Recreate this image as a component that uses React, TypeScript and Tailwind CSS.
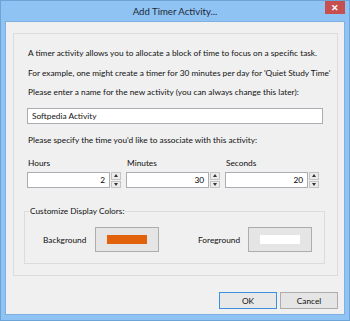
import React from "react";

const font = { fontFamily: 'Lato, "Noto Sans", sans-serif' };

function Spin({ value }: { value: string }) {
  return (
    <div className="flex items-center">
      <div className="w-[83px] h-[16px] bg-white border border-[#abadb3] flex items-center justify-end pr-[4px] text-black leading-none">
        {value}
      </div>
      <div className="ml-[1px] w-[10px] h-[16px] flex flex-col gap-[1px]">
        <div className="flex-1 bg-[#ececec] border border-[#c4c4c4] flex items-center justify-center">
          <div className="w-0 h-0 border-l-[2px] border-r-[2px] border-b-[3px] border-l-transparent border-r-transparent border-b-[#333]" />
        </div>
        <div className="flex-1 bg-[#ececec] border border-[#c4c4c4] flex items-center justify-center">
          <div className="w-0 h-0 border-l-[2px] border-r-[2px] border-t-[3px] border-l-transparent border-r-transparent border-t-[#333]" />
        </div>
      </div>
    </div>
  );
}

export default function App() {
  return (
    <div style={font} className="w-[350px] h-[321px] bg-[#8fc3f4] border border-[#6da4d8] flex flex-col overflow-hidden whitespace-nowrap">
      <div className="h-[20px] shrink-0 relative flex items-center justify-center text-[9.6px] text-[#1e2a36]">
        <span className="mt-[2px]">Add Timer Activity...</span>
        <div className="absolute top-[-1px] right-[4px] w-[20px] h-[14px] bg-[#c74f4f] flex items-center justify-center text-white text-[9px] font-bold leading-none">
          ✕
        </div>
      </div>
      <div className="flex-1 mx-[4px] mb-[5px] bg-[#f0f0f0] border border-[#7fb0e0] flex flex-col text-[8.3px] text-[#111] leading-[16px]">
        <div className="mt-[11px] ml-[7px] mr-[6px] h-[243px] shrink-0 border border-[#dcdcdc] flex flex-col pl-[13px] pr-[13px]">
          <div className="mt-[11px] pl-[1px]">A timer activity allows you to allocate a block of time to focus on a specific task.</div>
          <div className="mt-[4px] pl-[1px]">For example, one might create a timer for 30 minutes per day for 'Quiet Study Time'</div>
          <div className="mt-[3px] pl-[1px]">Please enter a name for the new activity (you can always change this later):</div>
          <div className="mt-[8px] w-[296px] h-[16px] bg-white border border-[#abadb3] flex items-center pl-[4px] leading-none">
            Softpedia Activity
          </div>
          <div className="mt-[8px] pl-[1px]">Please specify the time you'd like to associate with this activity:</div>
          <div className="mt-[7px] flex">
            <div className="w-[100px] flex flex-col">
              <div className="pl-[1px]">Hours</div>
              <div className="mt-[1px]"><Spin value="2" /></div>
            </div>
            <div className="w-[100px] flex flex-col">
              <div className="pl-[1px]">Minutes</div>
              <div className="mt-[1px]"><Spin value="30" /></div>
            </div>
            <div className="w-[100px] flex flex-col">
              <div className="pl-[1px]">Seconds</div>
              <div className="mt-[1px]"><Spin value="20" /></div>
            </div>
          </div>
          <div className="mt-[23px] ml-[-3px] w-[301px] h-[53px] shrink-0 border border-[#dcdcdc] relative">
            <div className="absolute left-[4px] top-[-9px] px-[1px] bg-[#f0f0f0]">Customize Display Colors:</div>
            <div className="flex items-center mt-[15px]">
              <div className="ml-[18px] w-[52px] shrink-0">Background</div>
              <div className="w-[64px] h-[25px] shrink-0 border border-[#adadad] bg-[#e5e5e5] flex items-center justify-center">
                <div className="w-[40px] h-[9px] bg-[#e2620c]" />
              </div>
              <div className="ml-[39px] w-[50px] shrink-0">Foreground</div>
              <div className="w-[64px] h-[25px] shrink-0 border border-[#adadad] bg-[#e5e5e5] flex items-center justify-center">
                <div className="w-[40px] h-[9px] bg-white" />
              </div>
            </div>
          </div>
        </div>
        <div className="mt-[16px] flex justify-end gap-[3px] mr-[6px]">
          <div className="w-[58px] h-[17px] shrink-0 border border-[#3c8fe0] bg-[#e8e8e8] flex items-center justify-center">OK</div>
          <div className="w-[58px] h-[17px] shrink-0 border border-[#adadad] bg-[#e5e5e5] flex items-center justify-center">Cancel</div>
        </div>
      </div>
    </div>
  );
}
